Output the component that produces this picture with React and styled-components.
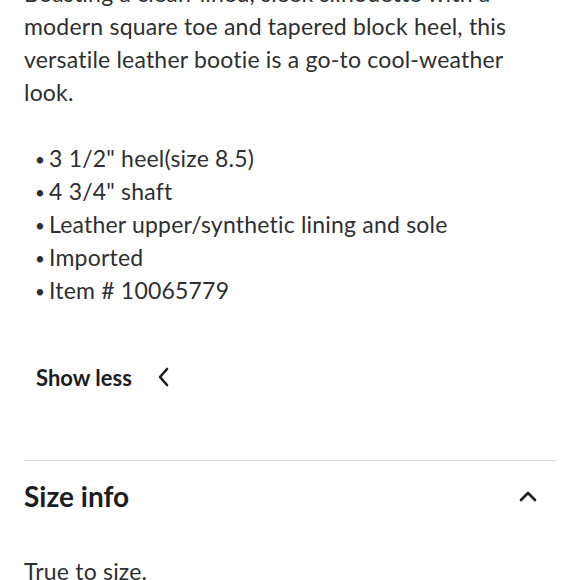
import React from "react";
import styled, { createGlobalStyle } from "styled-components";

const Global = createGlobalStyle`
	html, body {
		margin: 0;
		padding: 0;
		background: #fff;
	}
	body {
		font-family: Lato, "Open Sans", sans-serif;
		color: #2e2f32;
		overflow: hidden;
	}
`;

const Page = styled.div`
	width: 580px;
	height: 580px;
	overflow: hidden;
	padding: 0 24px;
	box-sizing: border-box;
`;

const Description = styled.p`
	margin: -23px 0 0;
	font-size: 23px;
	letter-spacing: 0.2px;
	line-height: 33px;
	max-width: 500px;
`;

const Bullets = styled.ul`
	list-style: none;
	margin: 33px 0 0;
	padding: 0 0 0 11px;
	font-size: 23px;
	letter-spacing: 0.2px;
	line-height: 33px;
`;

const Bullet = styled.li`
	height: 33px;
	&:before {
		content: "•";
		display: inline-block;
		width: 14px;
		font-size: 17px;
		line-height: 1;
		vertical-align: 1px;
	}
`;

const ShowLess = styled.button`
	display: flex;
	align-items: center;
	gap: 22px;
	margin: 56px 0 0 12px;
	padding: 0;
	border: 0;
	background: none;
	font-family: inherit;
	font-size: 22px;
	font-weight: 700;
	color: #1d1d1f;
	height: 28px;
	cursor: pointer;
`;

const Divider = styled.hr`
	margin: 69px 0 0;
	border: 0;
	border-top: 1.5px solid #d8d8d8;
`;

const SectionHeader = styled.div`
	display: flex;
	align-items: center;
	justify-content: space-between;
	height: 70px;
	padding-right: 18px;
`;

const SectionTitle = styled.h2`
	margin: 0;
	font-size: 28px;
	font-weight: 700;
	color: #1d1d1f;
`;

const SectionBody = styled.p`
	margin: 24px 0 0;
	font-size: 23px;
	letter-spacing: 0.2px;
	line-height: 33px;
`;

const Chevron = ({ dir }) => (
	<svg width="20" height="20" viewBox="0 0 20 20" fill="none" stroke="#1d1d1f" strokeWidth="2.6" strokeLinecap="round" strokeLinejoin="round">
		{dir === "left" ? <path d="M13 2 L6 10 L13 18" /> : <path d="M3 14 L10 7 L17 14" />}
	</svg>
);

const items = [
	"3 1/2\" heel(size 8.5)",
	"4 3/4\" shaft",
	"Leather upper/synthetic lining and sole",
	"Imported",
	"Item # 10065779",
];

export default function App() {
	return (
		<Page>
			<Global />
			<Description>
				Boasting a clean-lined, sleek silhouette with a modern square toe and tapered block heel, this versatile leather bootie is a go-to cool-weather look.
			</Description>
			<Bullets>
				{items.map((item) => (
					<Bullet key={item}>{item}</Bullet>
				))}
			</Bullets>
			<ShowLess>
				Show less
				<Chevron dir="left" />
			</ShowLess>
			<Divider />
			<SectionHeader>
				<SectionTitle>Size info</SectionTitle>
				<Chevron dir="up" />
			</SectionHeader>
			<SectionBody>True to size.</SectionBody>
		</Page>
	);
}
